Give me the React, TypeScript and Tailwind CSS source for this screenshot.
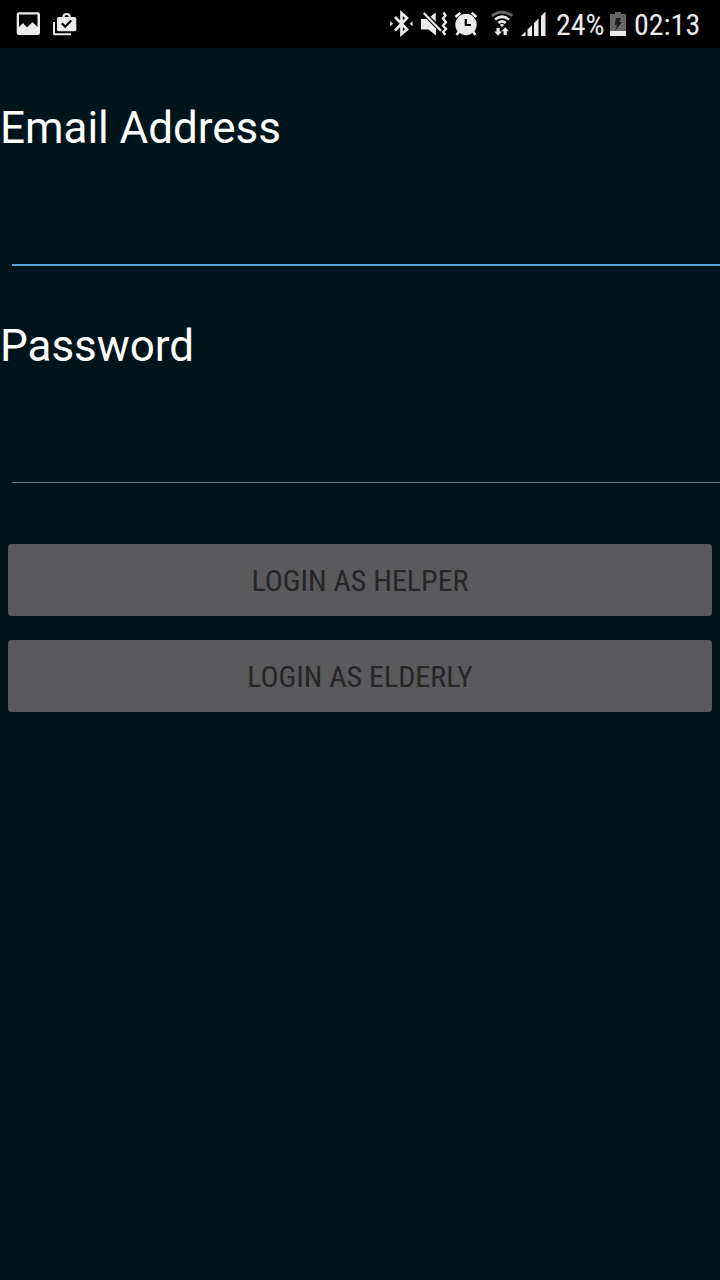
import type { ReactNode } from "react";

function Glyph({ w, className = "", children }: { w: number; className?: string; children: ReactNode }) {
  return (
    <svg width={w} height={48} viewBox={`0 0 ${w} 48`} fill="#ebebeb" className={`shrink-0 ${className}`}>
      {children}
    </svg>
  );
}

function StatusBar() {
  return (
    <header className="flex h-12 items-center bg-black pl-4 text-[30px] leading-[48px] text-[#ebebeb]">
      <Glyph w={24}>
        <path
          fillRule="evenodd"
          d="M3.300 12.300H21.700Q24 12.300 24 14.600V32.700Q24 35 21.700 35H3Q.7 35 .7 32.700V14.600Q.7 12.300 3.300 12.300ZM3 14.500V27L7 23L11 27.500L16.500 22L21.500 27V14.500Z"
        />
      </Glyph>
      <Glyph w={25} className="ml-3">
        <path d="M1 22H3V33.200H19V35.300H2.500Q1 35.300 1 33.800Z" />
        <path
          fillRule="evenodd"
          d="M10.500 17V16Q11 13 14.600 13T18.700 16V17H22.500Q24.300 17 24.300 18.800V29.500Q24.300 31.300 22.500 31.300H7Q5 31.300 5 29.500V18.800Q5 17 7 17ZM12.500 17H16.700Q16.700 15 14.600 15T12.500 17Z"
        />
        <path d="M9.800 23.300L13.200 26.700L19.200 20.500" fill="none" stroke="#000" strokeWidth="2.200" />
      </Glyph>

      <div className="ml-auto flex h-12">
        <Glyph w={24}>
          <path
            d="M5 17L17 29.300L11.500 34V13L17 18L5 30.500"
            fill="none"
            stroke="#ebebeb"
            strokeWidth="2.700"
          />
          <path d="M.2 21.300L3.200 23.800L.2 26.300ZM22.600 21.300V26.300L19.600 23.800Z" />
        </Glyph>
        <Glyph w={27} className="ml-[7px]">
          <path d="M0 19H5.500L10 23.500L15 28.500V35.500L7.500 29.500H0ZM9.500 16.500L14.700 12.500V21.700Z" />
          <path d="M2.700 13L20 30.800" stroke="#ebebeb" strokeWidth="2.200" fill="none" />
          <path
            d="M22.500 12.500L24.500 15.500L22 18.500L25 22.200L22 25.500L25 29L22 32L24.500 35"
            fill="none"
            stroke="#ebebeb"
            strokeWidth="2.300"
          />
        </Glyph>
        <Glyph w={26} className="ml-[5px]">
          <circle cx="13" cy="24.500" r="10.700" />
          <path
            d="M2.500 17L7.300 12.700M18.700 12.700L23.500 17M6.500 31L3.500 35M19.600 31L22.600 35"
            fill="none"
            stroke="#ebebeb"
            strokeWidth="2.500"
          />
          <path d="M12.800 19V25H18" fill="none" stroke="#000" strokeWidth="2.200" />
        </Glyph>
        <Glyph w={22} className="ml-3">
          <g fill="none" strokeWidth="2.700">
            <path d="M.8 15.800Q11 8.300 21.200 15.800" stroke="#666" />
            <path d="M4 19.500Q11 14 18 19.500M7.300 23Q11 20 14.700 23" stroke="#ebebeb" />
          </g>
          <path d="M8.700 24.700Q11 23.200 13.300 24.700L11 27Z" />
          <path d="M5.500 28H8.700V31.500H11L7.100 35.700L3.200 31.500H5.500ZM12.600 35V31.300H10.500L14.200 27.300L18 31.300H15.800V35Z" />
        </Glyph>
        <Glyph w={26} className="ml-2">
          <path d="M0 36L4.500 31.500V36ZM6.500 29.500L11 25V36H6.500ZM13 23L17.500 18.500V36H13ZM20 16L24.500 11.500V36H20Z" />
        </Glyph>
        <span className="ml-[9px] mt-px w-12 whitespace-nowrap font-['Roboto_Condensed','Roboto',sans-serif]">
          24%
        </span>
        <Glyph w={16} className="ml-[6px]">
          <path d="M5 12H11V14H16V36H0V14H5Z" fill="#666" />
          <path d="M0 31H16V36H0Z" />
          <path d="M6 18H11L9.500 22H12L5 31L7 25H4.500Z" fill="#1c1c1c" />
        </Glyph>
        <span className="ml-2 mr-5 mt-px w-[66px] whitespace-nowrap font-['Roboto_Condensed','Roboto',sans-serif]">
          02:13
        </span>
      </div>
    </header>
  );
}

function Field({ label, type, line }: { label: string; type: string; line: string }) {
  return (
    <label className="block">
      <span className="block h-[60px] text-[44px] leading-[60px] tracking-[-0.04px] whitespace-nowrap">{label}</span>
      <input
        type={type}
        className={`ml-3 block w-[708px] bg-transparent px-2 text-4xl text-white outline-none ${line}`}
      />
    </label>
  );
}

function LoginButton({ children }: { children: ReactNode }) {
  return (
    <button
      disabled
      className="flex h-[72px] items-center justify-center rounded-[4px] bg-[#5a595b] pt-px text-[30px] text-[#252527]"
    >
      <span className="whitespace-nowrap font-['Roboto_Condensed','Roboto',sans-serif]">{children}</span>
    </button>
  );
}

export default function App() {
  return (
    <div className="flex h-[1280px] w-[720px] flex-col overflow-hidden bg-[#00151b] font-['Roboto',sans-serif] text-white">
      <StatusBar />
      <form className="flex flex-col pt-[50px]">
        <Field label="Email Address" type="email" line="h-[108px] border-b-2 border-[#55a8d8]" />
        <div className="h-[50px]" />
        <Field label="Password" type="password" line="h-[107px] border-b border-[#6b777b]" />
        <div className="mt-[61px] flex flex-col gap-6 px-2">
          <LoginButton>LOGIN AS HELPER</LoginButton>
          <LoginButton>LOGIN AS ELDERLY</LoginButton>
        </div>
      </form>
    </div>
  );
}
